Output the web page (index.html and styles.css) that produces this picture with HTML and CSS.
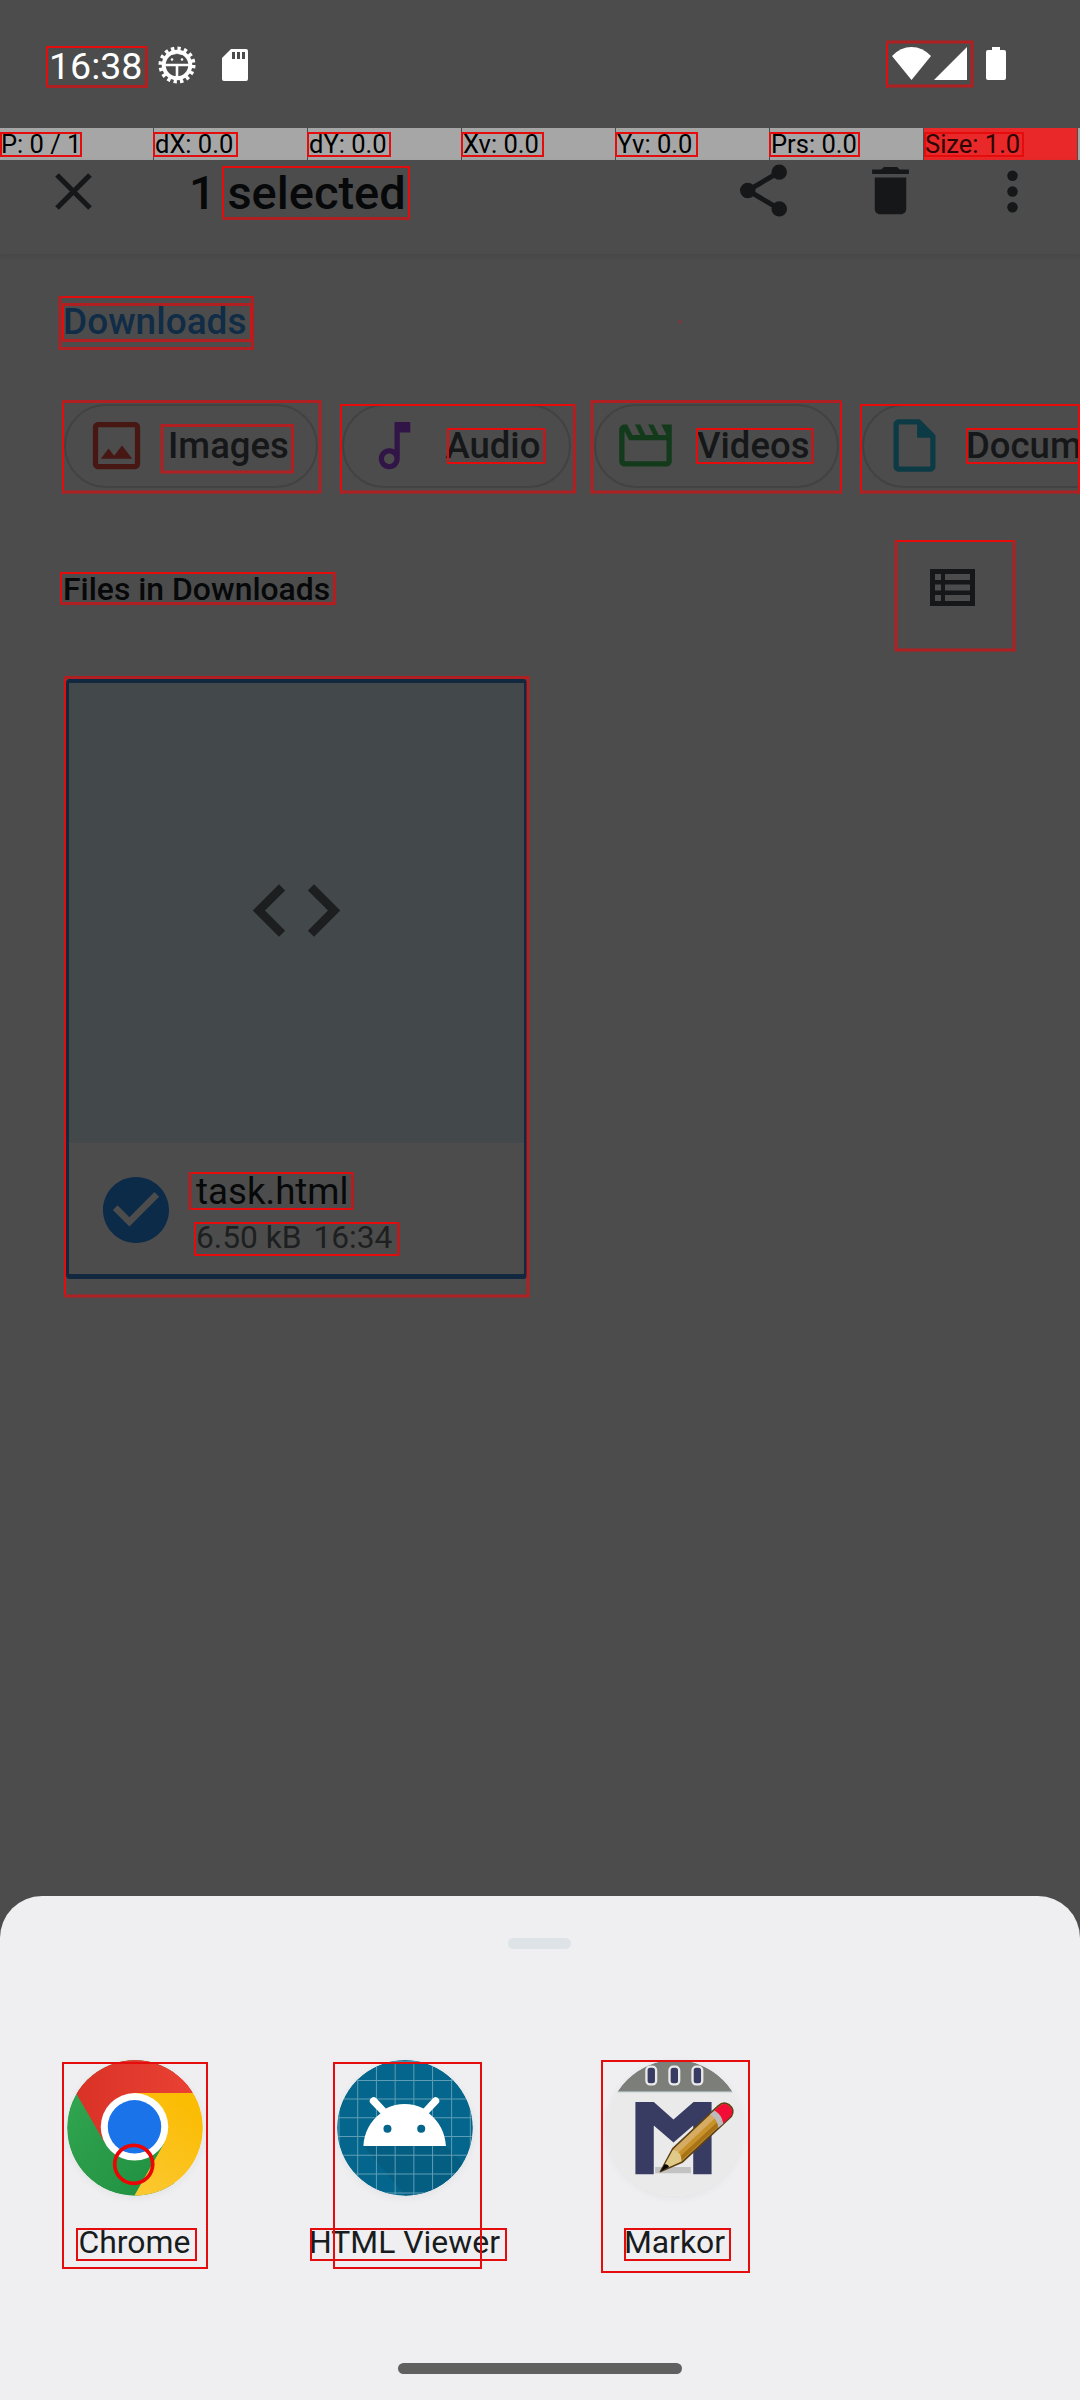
FILE: index.html
```html
<!DOCTYPE html>
<html lang="en">
<head>
<meta charset="utf-8">
<title>Files</title>
<link rel="stylesheet" href="styles.css">
</head>
<body>
<div class="screen">
  <header class="status">
    <span class="clock">16:38</span>
    <svg class="gear" width="38" height="38" viewBox="-19 -19 38 38">
      <circle r="16" fill="none" stroke="#fff" stroke-width="5" stroke-dasharray="3.2 3.08"/>
      <circle r="13.3" fill="none" stroke="#fff" stroke-width="4"/>
      <path d="M-12 0H12M0 0V13" stroke="#fff" stroke-width="2.6"/>
      <circle cx="-5" cy="-5.5" r="1.3" fill="#fff"/><circle cx="5" cy="-5.5" r="1.3" fill="#fff"/>
      <path d="M-11 -8Q0 -14 11 -8L8 -11H-8Z" fill="#fff"/>
    </svg>
    <svg class="sd" width="26" height="32" viewBox="0 0 26 32"><path d="M9 0H24Q26 0 26 2V30Q26 32 24 32H2Q0 32 0 30V9Z" fill="#fff"/><path d="M10 3h3v7h-3zM15 3h3v7h-3zM20 3h3v7h-3z" fill="#4c4c4c"/></svg>
    <span class="grow"></span>
    <svg class="wifi" width="39" height="33" viewBox="0 0 39 33"><path d="M19.5 33L0 9Q8.500 0 19.500 0T39 9Z" fill="#fff"/></svg>
    <svg class="cell" width="33" height="33" viewBox="0 0 33 33"><path d="M33 0V33H0Z" fill="#fff"/></svg>
    <svg class="battery" width="20" height="33" viewBox="0 0 20 33"><path d="M6 0h8v3h4q2 0 2 2v26q0 2-2 2H2q-2 0-2-2V5q0-2 2-2h4z" fill="#fff"/></svg>
  </header>

  <div class="pointer">
    <span>P: 0 / 1</span><span>dX: 0.0</span><span>dY: 0.0</span><span>Xv: 0.0</span><span>Yv: 0.0</span><span>Prs: 0.0</span><span class="hot">Size: 1.0</span><span></span>
  </div>

  <div class="toolbar">
    <svg class="close" width="37" height="37" viewBox="0 0 37 37"><path d="M2 2L35 35M35 2L2 35" stroke="#151719" stroke-width="5.200"/></svg>
    <h1 class="title">1 selected</h1>
    <svg class="tool share" viewBox="0 0 24 24"><path d="M18 5L6 12L18 19" fill="none" stroke="#151719" stroke-width="1.900"/><circle cx="18" cy="5" r="2.950"/><circle cx="6" cy="12" r="2.950"/><circle cx="18" cy="19" r="2.950"/></svg>
    <svg class="tool trash" viewBox="0 0 24 24"><path d="M6 19c0 1.100.9 2 2 2h8c1.100 0 2-.9 2-2V7H6v12zM19 4h-3.500l-1-1h-5l-1 1H5v1.700h14V4z"/></svg>
    <svg class="tool more" viewBox="0 0 24 24"><circle cx="12" cy="6" r="2"/><circle cx="12" cy="12" r="2"/><circle cx="12" cy="18" r="2"/></svg>
  </div>

  <main class="content">
    <div class="crumb">Downloads</div>
    <div class="chips">
      <div class="chip images"><svg class="glyph" viewBox="0 0 24 24"><path d="M19 5v14H5V5h14m0-2H5c-1.100 0-2 .9-2 2v14c0 1.100.9 2 2 2h14c1.100 0 2-.9 2-2V5c0-1.100-.9-2-2-2zm-4.900 9l-3 3.860L9 13.140 6 17h12l-3.900-5z"/></svg><span>Images</span></div>
      <div class="chip audio"><svg class="glyph" viewBox="0 0 24 24"><path d="M12 3l.01 10.550c-.59-.34-1.270-.55-2-.55C7.790 13 6 14.790 6 17s1.790 4 4.010 4S14 19.210 14 17V7h4V3h-6zm-1.990 16c-1.100 0-2-.9-2-2s.9-2 2-2 2 .9 2 2-.9 2-2 2z"/></svg><span>Audio</span></div>
      <div class="chip videos"><svg class="glyph" viewBox="0 0 24 24"><path d="M18 4l2 4h-3l-2-4h-2l2 4h-3l-2-4H8l2 4H7L5 4H4c-1.100 0-2 .9-2 2v12c0 1.100.9 2 2 2h16c1.100 0 2-.9 2-2V4h-4zM4 6.470L5.760 10H20v8H4V6.470z"/></svg><span>Videos</span></div>
      <div class="chip docs"><svg class="glyph" viewBox="0 0 24 24"><path d="M14 2H6c-1.100 0-2 .9-2 2v16c0 1.100.9 2 2 2h12c1.100 0 2-.9 2-2V8l-6-6zM6 20V4h7v5h5v11H6z"/></svg><span>Docum</span></div>
    </div>
    <div class="section">
      <h2>Files in Downloads</h2>
      <svg width="45" height="37" viewBox="0 0 45 37"><path fill-rule="evenodd" d="M0 0H45V37H0ZM5 5V11H11V5ZM15 5V11H40V5ZM5 15.500V21.500H11V15.500ZM15 15.500V21.500H40V15.500ZM5 26V32H11V26ZM15 26V32H40V26Z" fill="#151719"/></svg>
    </div>
    <div class="card">
      <div class="preview"><svg width="105" height="105" viewBox="0 0 24 24"><path d="M9.400 16.600L4.800 12l4.600-4.600L8 6l-6 6 6 6 1.400-1.400zm5.200 0l4.600-4.600-4.600-4.600L16 6l6 6-6 6-1.400-1.400z" fill="#1c1e20"/></svg></div>
      <div class="file">
        <svg width="66" height="66" viewBox="2 2 20 20"><path d="M12 2C6.480 2 2 6.480 2 12s4.480 10 10 10 10-4.480 10-10S17.520 2 12 2zm-2 15l-5-5 1.410-1.410L10 14.170l7.590-7.590L19 8l-9 9z" fill="#0b2b49"/></svg>
        <div class="names"><div class="name">task.html</div><div class="meta"><span>6.50 kB</span><span>16:34</span></div></div>
      </div>
    </div>
  </main>

  <section class="sheet">
    <div class="grip"></div>
    <div class="apps">
      <div class="app">
        <svg viewBox="80 60 407 407">
          <defs><clipPath id="disc"><circle cx="283.500" cy="263" r="203"/></clipPath>
          <linearGradient id="red" x1="0" x2="1"><stop offset="0" stop-color="#d93025"/><stop offset="1" stop-color="#ea4335"/></linearGradient>
          <linearGradient id="yellow" x1="0" y1="1" x2=".5" y2="0"><stop offset="0" stop-color="#fcc934"/><stop offset="1" stop-color="#fbbc04"/></linearGradient>
          <linearGradient id="green" x1="1" y1="1" x2="0" y2="0"><stop offset="0" stop-color="#1e8e3e"/><stop offset="1" stop-color="#34a853"/></linearGradient></defs>
          <g clip-path="url(#disc)"><path d="M80 60H400V467H80Z" fill="url(#green)"/><path d="M282 159H490V467H281L369 312Z" fill="url(#yellow)"/><path d="M70 95V40H490V159H282V260L192 306Z" fill="url(#red)"/></g>
          <circle cx="282" cy="260" r="101" fill="#fff"/><circle cx="282" cy="260" r="80" fill="#1a73e8"/>
        </svg>
        <span>Chrome</span>
      </div>
      <div class="app">
        <svg viewBox="140 60 407 407">
          <defs><clipPath id="disc2"><circle cx="343.500" cy="263" r="203"/></clipPath></defs>
          <g clip-path="url(#disc2)"><path d="M140 60H547V467H140Z" fill="#04668c"/>
          <path d="M219 316H465L547 400V467H345Z" fill="#035b7e" opacity=".7"/>
          <path d="M146 60V467M202 60V467M258 60V467M314 60V467M370 60V467M426 60V467M483 60V467M539 60V467M140 64H547M140 121H547M140 177H547M140 233H547M140 289H547M140 345H547M140 401H547M140 458H547" stroke="#5f9db5" stroke-width="3"/></g>
          <path d="M219 317C221 278 239 243 270 220L242 191A10 10 0 0 1 257 174L286 205Q342 179 399 205L428 174A10 10 0 0 1 442 191L415 219C446 243 464 278 466 317Z" fill="#fff"/>
          <circle cx="291" cy="266" r="12" fill="#04668c"/><circle cx="392" cy="266" r="12" fill="#04668c"/>
        </svg>
        <span>HTML Viewer</span>
      </div>
      <div class="app">
        <svg viewBox="80 60 407 407">
          <circle cx="283.500" cy="263" r="203" fill="#eaeaea"/>
          <g clip-path="url(#disc)"><path d="M80 60H487V154H80Z" fill="#7c7e79"/><path d="M80 155H487" stroke="#9fb0b3" stroke-width="3"/></g>
          <g fill="#383c63" stroke="#eaeaea" stroke-width="7"><rect x="198" y="80" width="29" height="53" rx="11"/><rect x="267" y="80" width="29" height="53" rx="11"/><rect x="336" y="80" width="29" height="53" rx="11"/></g>
          <path d="M224 380H331V399H224Z" fill="#c2c2c2"/>
          <path d="M165 186H220L279 238L339 186H393V402H338V256L279 307L220 256V402H165Z" fill="#383c63"/>
          <path d="M240 394L277 325L413 197Q429 183 445 194Q464 209 452 229L306 365Z" fill="#c8922b" stroke="#5c4219" stroke-width="5" stroke-linejoin="round"/>
          <path d="M280 326L390 222L402 235L292 338Z" fill="#d6ab63"/>
          <path d="M301 362L420 252L412 244L299 349Z" fill="#a87218"/>
          <path d="M243 391L278 328Q304 336 303 363Z" fill="#e0ca89"/>
          <path d="M240 394L252 372Q263 370 266 380Z" fill="#080705"/>
          <path d="M388 223L402 211Q424 222 428 250L413 263Q411 237 388 223Z" fill="#bdbabb"/>
          <path d="M402 211L415 199Q430 186 443 196Q462 210 450 228L428 249Q424 224 402 211Z" fill="#f30c35"/>
        </svg>
        <span>Markor</span>
      </div>
    </div>
    <div class="navbar"></div>
  </section>

  <!-- view-bounds overlay -->
  <svg class="bounds" width="1080" height="2400" viewBox="0 0 1080 2400">
    <g class="hard">
      <path d="M47 88V47H148"/>
      <path d="M887 41V88"/>
      <path d="M1 133H81V156H1ZM154 133H237V156H154ZM308 133H390V156H308ZM462 133H543V156H462ZM616 133H697V156H616ZM770 133H859V156H770ZM925 133H1023V156H925Z"/>
      <path d="M223 220V167H409V220"/>
      <path d="M59 297H254M63 303V342M251 303V342"/>
      <path d="M63 400V494M341 494V405H576M841 400V494M861 494V405H1079V494"/>
      <path d="M545 463H448V429H545M813 463H697V429H813M1080 463H967V429H1080"/>
      <path d="M61 605V573H335M895 541H1015M65 676V1297"/>
      <path d="M189 1173H353M189 1209H353M399 1255H195V1223H399"/>
      <path d="M63 2063H207V2268H63ZM334 2063H481V2268H334ZM602 2061H749V2272H602Z"/>
      <path d="M77 2229H196V2260H77ZM311 2229H506V2260H311ZM625 2229H730V2260H625Z"/>
      <circle class="touch" cx="133.700" cy="2164.300" r="19"/>
    </g>
    <g class="soft">
      <path d="M146.500 46V86.500H46"/>
      <path d="M886 42H972V86H886"/>
      <path d="M222 218.500H410"/>
      <path d="M60 296V348.500H252.500V296M62 304.500H252M62 340.500H252"/>
      <path d="M62 401.500H320V492H62M574.500 404V492H340M592 494V401.500H842M591 492H842M860 492H1080"/>
      <path d="M162 425.500H292.500V472H162ZM544.500 428V464M812.500 428V464"/>
      <path d="M60 603.500H334.500V572M896 540V650H1014V540"/>
      <path d="M64 677.500H528V1296H64M190 1172V1210M352.500 1172V1210M398.500 1222V1256"/>
    </g>
    <circle cx="680" cy="321.700" r="1.800" fill="#803838"/>
  </svg>
</div>
</body>
</html>
```
FILE: styles.css
```css
* { box-sizing: border-box; }
body { margin: 0; font-family: Roboto, "Liberation Sans", sans-serif; background: #4c4c4c; }
svg { display: block; flex: none; }
h1, h2 { margin: 0; font-weight: 500; }
.screen { position: relative; width: 1080px; height: 2400px; overflow: hidden; display: flex; flex-direction: column; background: #4c4c4c; }

.status { height: 128px; display: flex; align-items: flex-start; padding: 46px 74px 0 49px; }
.clock { width: 109px; font-size: 37.5px; line-height: 40px; color: #fff; white-space: nowrap; }
.sd { margin: 3px 0 0 26px; }
.grow { flex: 1; }
.wifi, .cell, .battery { margin-top: 1px; }
.cell { margin-left: 3px; }
.battery { margin-left: 19px; }

.pointer { height: 32px; display: grid; grid-template-columns: repeat(7, 153px) 3px; column-gap: 1px; }
.pointer span { background: #a6a6a6; color: #000; font-size: 25.5px; line-height: 32px; padding-left: 1px; white-space: nowrap; overflow: hidden; }
.pointer .hot { background: #e82829; color: #2c0505; }

.toolbar { height: 94px; display: flex; align-items: flex-start; padding-left: 55px; box-shadow: 0 2px 5px rgba(0, 0, 0, .09); }
.close { margin-top: 13px; }
.title { width: 640px; margin: 5px 0 0 97px; font-size: 47px; line-height: 56px; color: #070809; white-space: nowrap; }
.tool { width: 63px; height: 63px; margin-top: -1px; fill: #151719; }
.share { margin-left: -97px; }
.trash { margin-left: 64px; }
.more { margin-left: 59px; margin-top: 0; }

.content { flex: none; height: 1642px; padding: 44px 0 0 64px; }
.crumb { height: 46px; margin-left: -1px; font-size: 37px; line-height: 47px; font-weight: 500; color: #102c46; }
.chips { display: flex; gap: 23.5px; margin-top: 60px; }
.chip { flex: none; height: 84px; border: 2px solid #424242; border-radius: 42px; display: flex; align-items: center; padding: 0 0 1px 19px; font-size: 36.5px; font-weight: 500; color: #151719; white-space: nowrap; }
.glyph { width: 63px; height: 63px; margin-right: 20px; }
.images { width: 254px; }
.images .glyph { fill: #461713; }
.audio { width: 229px; }
.audio .glyph { fill: #301546; }
.videos { width: 244.5px; padding-left: 18px; }
.videos .glyph { fill: #123a1b; }
.docs { width: 310px; }
.docs .glyph { fill: #0c3a45; }
.section { display: flex; justify-content: space-between; padding: 81px 105px 0 0; }
.section h2 { margin-left: -1px; font-size: 31.9px; line-height: 41px; color: #070809; }
.card { width: 461px; height: 600px; margin: 69px 0 0 2px; border: solid #11283f; border-width: 4px 3px 5px; border-radius: 4px; }
.preview { height: 460px; display: flex; align-items: center; justify-content: center; background: #43484b; padding-bottom: 5px; }
.file { display: flex; padding: 34px 0 0 34px; }
.names { padding-left: 27px; }
.name { font-size: 36.7px; line-height: 44px; margin-top: -7px; color: #070809; }
.meta { display: flex; gap: 12px; font-size: 31.7px; line-height: 40px; margin-top: 4px; color: #1d1f20; }

.sheet { flex: none; height: 504px; padding-top: 42px; background: #efeff1; border-radius: 42px 42px 0 0; display: flex; flex-direction: column; align-items: center; }
.grip { width: 63px; height: 11px; margin-right: 2px; border-radius: 6px; background: #dde3e7; }
.apps { width: 1080px; display: grid; grid-template-columns: repeat(4, 270px); margin-top: 111px; }
.app { display: flex; flex-direction: column; align-items: center; padding-right: 1px; font-size: 31.9px; color: #191c1e; }
.app svg { width: 136px; height: 136px; border-radius: 50%; box-shadow: 0 2px 8px rgba(0, 0, 0, .05); }
.app span { margin-top: 26px; line-height: 41px; white-space: nowrap; }
.navbar { width: 284px; height: 11px; border-radius: 6px; background: #606060; margin-top: 100px; }

.bounds { position: absolute; left: 0; top: 0; fill: none; }
.hard { stroke: #e40c0c; stroke-width: 2; }
.touch { stroke: #eb0505; stroke-width: 3.7; }
.soft { stroke: #b02022; stroke-width: 3; }
```
